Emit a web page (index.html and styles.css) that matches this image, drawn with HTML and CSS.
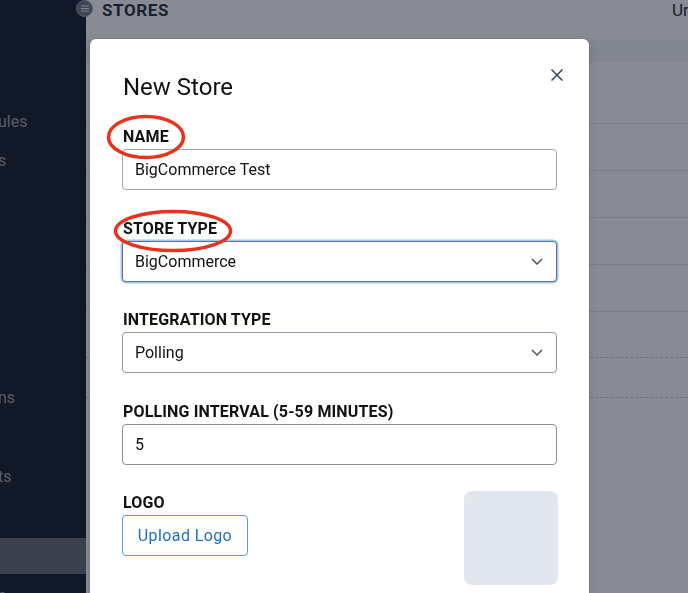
FILE: index.html
```html
<!DOCTYPE html>
<html lang="en">
<head>
    <meta charset="UTF-8">
    <meta name="viewport" content="width=device-width, initial-scale=1.0">
    <title>Stores</title>
    <link rel="stylesheet" href="styles.css">
</head>
<body>
    <div class="app">
        <aside class="sidebar">
            <nav class="side-nav">
                <a class="side-link"></a>
                <a class="side-link"></a>
                <a class="side-link">ules</a>
                <a class="side-link">s</a>
                <a class="side-link"></a>
                <a class="side-link"></a>
                <a class="side-link"></a>
                <a class="side-link"></a>
                <a class="side-link"></a>
                <a class="side-link">ns</a>
                <a class="side-link"></a>
                <a class="side-link">ts</a>
                <a class="side-link"></a>
                <a class="side-link active"></a>
                <a class="side-link">e</a>
            </nav>
        </aside>

        <div class="main">
            <header class="topbar">
                <button class="nav-toggle" aria-label="Toggle menu">
                    <svg width="8" height="7" viewBox="0 0 8 7">
                        <path d="M0 1h8M0 3.5h8M0 6h8" stroke="currentColor" stroke-width="1.1"/>
                    </svg>
                </button>
                <h1 class="page-title">STORES</h1>
                <div class="user-menu">Urban Admin</div>
            </header>

            <div class="stores-table">
                <div class="table-head"></div>
                <div class="table-row tall"></div>
                <div class="table-row"></div>
                <div class="table-row"></div>
                <div class="table-row"></div>
                <div class="table-row"></div>
                <div class="table-row dashed"></div>
                <div class="table-row dashed short"></div>
            </div>
        </div>
    </div>

    <div class="backdrop"></div>

    <div class="modal-wrap">
        <div class="modal">
            <div class="modal-header">
                <h2 class="modal-title">New Store</h2>
                <button class="modal-close" aria-label="Close">
                    <svg width="12" height="12" viewBox="0 0 12 12">
                        <path d="M0.5 0.5l11 11M11.5 0.5l-11 11" stroke="currentColor" stroke-width="1.5"/>
                    </svg>
                </button>
            </div>

            <div class="field">
                <label class="field-label">NAME</label>
                <input class="field-input" type="text" value="BigCommerce Test">
            </div>

            <div class="field">
                <label class="field-label">STORE TYPE</label>
                <div class="select-wrap">
                    <select class="field-input field-select focused">
                        <option>BigCommerce</option>
                    </select>
                    <svg class="select-arrow" width="12" height="7" viewBox="0 0 12 7">
                        <path d="M1 1l5 5 5-5" fill="none" stroke="currentColor" stroke-width="1.5"/>
                    </svg>
                </div>
            </div>

            <div class="field">
                <label class="field-label">INTEGRATION TYPE</label>
                <div class="select-wrap">
                    <select class="field-input field-select">
                        <option>Polling</option>
                    </select>
                    <svg class="select-arrow" width="12" height="7" viewBox="0 0 12 7">
                        <path d="M1 1l5 5 5-5" fill="none" stroke="currentColor" stroke-width="1.5"/>
                    </svg>
                </div>
            </div>

            <div class="field">
                <label class="field-label">POLLING INTERVAL (5-59 MINUTES)</label>
                <input class="field-input dark" type="text" value="5">
            </div>

            <div class="logo-row">
                <div class="field">
                    <label class="field-label">LOGO</label>
                    <button class="btn-outline">Upload Logo</button>
                </div>
                <div class="logo-preview"></div>
            </div>

            <!-- red marks around the two fields -->
            <svg class="mark mark-name" width="80" height="46" viewBox="0 0 80 46">
                <ellipse cx="40" cy="23" rx="37.5" ry="20.5" fill="none" stroke="#e9321c" stroke-width="3.5"/>
            </svg>
            <svg class="mark mark-type" width="120" height="44" viewBox="0 0 120 44">
                <ellipse cx="60" cy="22" rx="57.5" ry="19.5" fill="none" stroke="#e9321c" stroke-width="3.5"/>
            </svg>
        </div>
    </div>
</body>
</html>
```

FILE: styles.css
```css
html, body {
    margin: 0;
    padding: 0;
    height: 100%;
    overflow: hidden;
}
body {
    font-family: Roboto, "Liberation Sans", Arial, sans-serif;
    color: #111827;
    background-color: #ffffff;
}
.app {
    display: flex;
    width: 888px;
    height: 100vh;
}

/* sidebar */
.sidebar {
    width: 86px;
    flex-shrink: 0;
    background-color: #111827;
    overflow: hidden;
}
.side-nav {
    display: flex;
    flex-direction: column;
    gap: 3.5px;
    padding-top: 24px;
}
.side-link {
    display: flex;
    align-items: center;
    height: 36px;
    margin-left: -2px;
    font-size: 16px;
    color: #9ca3af;
    white-space: nowrap;
}
.side-link.active {
    background-color: #676a73;
    margin-left: 0;
}

/* main area */
.main {
    flex: 1;
    position: relative;
    background-color: #ffffff;
}
.topbar {
    display: grid;
    grid-template-columns: 1fr 200px;
    align-items: start;
    height: 40px;
    padding: 0 16px;
}
.nav-toggle {
    position: absolute;
    left: -10px;
    top: 0;
    width: 17px;
    height: 17px;
    padding: 0;
    border-radius: 50%;
    border: 1px solid #9ca3af;
    background-color: #6d7383;
    color: #f3f4f6;
    display: flex;
    align-items: center;
    justify-content: center;
}
.page-title {
    margin: 0;
    font-size: 17px;
    font-weight: 700;
    line-height: 20px;
    letter-spacing: 0.6px;
    color: #1f2937;
}
.user-menu {
    font-size: 17px;
    line-height: 20px;
    color: #1f2937;
    white-space: nowrap;
}
.table-head {
    height: 22px;
    background-color: #f3f4f6;
}
.table-row {
    height: 46px;
    border-bottom: 1px solid #e5e7eb;
}
.table-row.tall {
    height: 61px;
}
.table-row.dashed {
    height: 45px;
    border-bottom: 1px dashed #c7cbd2;
}
.table-row.short {
    height: 39px;
}

/* modal */
.backdrop {
    position: fixed;
    inset: 0;
    background-color: rgba(17, 24, 39, 0.5);
}
.modal-wrap {
    position: fixed;
    inset: 0;
    padding: 39px 0 0 90px;
}
.modal {
    position: relative;
    width: 435px;
    padding: 32px 31px 40px 33px;
    background-color: #ffffff;
    border-radius: 6px;
    box-shadow: 0 0 0 1px rgba(0, 0, 0, 0.06), 0 4px 12px rgba(0, 0, 0, 0.1);
}
.modal-header {
    display: flex;
    justify-content: space-between;
    align-items: flex-start;
    margin-bottom: 24px;
}
.modal-title {
    margin: 0;
    font-size: 24px;
    font-weight: 400;
    line-height: 32px;
    color: #111111;
}
.modal-close {
    width: 24px;
    height: 24px;
    margin: -8px -11px 0 0;
    padding: 0;
    border: none;
    background: none;
    color: #374151;
    display: flex;
    align-items: center;
    justify-content: center;
}
.field {
    display: flex;
    flex-direction: column;
    margin-bottom: 28.5px;
}
.field-label {
    font-size: 16px;
    font-weight: 700;
    line-height: 20px;
    letter-spacing: 0.15px;
    margin-bottom: 2px;
    color: #111111;
}
.field-input {
    box-sizing: border-box;
    width: 100%;
    height: 41px;
    margin-left: -1px;
    padding: 0 12px;
    border: 1px solid #a3a6ab;
    border-radius: 4px;
    font-family: inherit;
    font-size: 16px;
    color: #111111;
    background-color: #ffffff;
    outline: none;
}
.field-input.dark {
    border-color: #8c8f95;
}
.select-wrap {
    position: relative;
}
.field-select {
    appearance: none;
    -webkit-appearance: none;
    border-color: #8d98aa;
}
.field-select.focused {
    border-color: #607089;
    box-shadow: 0 0 0 1.5px #a5c6ee;
}
.select-arrow {
    position: absolute;
    right: 15px;
    top: 17px;
    color: #4b5563;
    pointer-events: none;
}
.logo-row {
    display: flex;
    justify-content: space-between;
    align-items: flex-start;
}
.btn-outline {
    width: 126px;
    height: 41px;
    margin-left: -1px;
    padding: 0;
    border: 1px solid #5c9bd8;
    border-radius: 4px;
    background-color: #ffffff;
    color: #1b6fc4;
    font-family: inherit;
    font-size: 16px;
    letter-spacing: 0.4px;
    white-space: nowrap;
}
.logo-preview {
    width: 94px;
    height: 94px;
    margin-top: -2px;
    border-radius: 8px;
    background-color: #e2e7ef;
}
.mark {
    position: absolute;
    pointer-events: none;
}
.mark-name {
    left: 16px;
    top: 75px;
}
.mark-type {
    left: 23px;
    top: 170px;
}
```
